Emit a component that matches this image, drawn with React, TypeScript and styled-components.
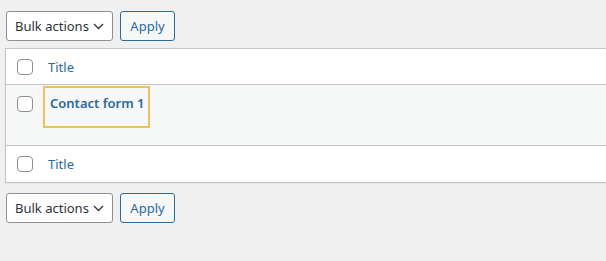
import React from "react";
import styled, { createGlobalStyle } from "styled-components";

const GlobalStyle = createGlobalStyle`
  body {
    margin: 0;
    background: #f0f0f1;
    font-family: "Noto Sans", "Open Sans", sans-serif;
    color: #2c3338;
    overflow: hidden;
  }
`;

const Page = styled.div`
  width: 680px;
  padding: 11px 0 0 5px;
`;

const TableNav = styled.div<{ $bottom?: boolean }>`
  display: flex;
  align-items: center;
  gap: 7px;
  height: 30px;
  margin-left: 1px;
  margin-top: ${(p) => (p.$bottom ? "10px" : "0")};
  margin-bottom: ${(p) => (p.$bottom ? "0" : "7px")};
`;

const Select = styled.div`
  box-sizing: border-box;
  display: flex;
  align-items: center;
  justify-content: space-between;
  width: 107px;
  height: 30px;
  padding: 0 8px 0 8px;
  background: #fff;
  border: 1px solid #8c8f94;
  border-radius: 3px;
  font-size: 13px;
  white-space: nowrap;
  color: #2c3338;
  svg {
    flex: none;
  }
`;

const Button = styled.div`
  box-sizing: border-box;
  display: flex;
  align-items: center;
  justify-content: center;
  width: 55px;
  height: 30px;
  background: #f6f7f7;
  border: 1px solid #2a6a9c;
  border-radius: 3px;
  color: #2a6a9c;
  font-size: 13px;
`;

const Table = styled.div`
  background: #fff;
  border: 1px solid #c3c4c7;
  box-shadow: 0 1px 1px rgba(0, 0, 0, 0.04);
`;

const Row = styled.div<{ $height: number; $striped?: boolean; $divider?: boolean; $top?: boolean }>`
  display: flex;
  align-items: ${(p) => (p.$top ? "flex-start" : "center")};
  height: ${(p) => p.$height}px;
  background: ${(p) => (p.$striped ? "#f6f7f7" : "#fff")};
  border-bottom: ${(p) => (p.$divider ? "1px solid #c3c4c7" : "none")};
`;

const CheckCell = styled.div<{ $top?: boolean }>`
  flex: none;
  width: 31px;
  padding-left: 11px;
  padding-top: ${(p) => (p.$top ? "11px" : "0")};
  display: flex;
`;

const Checkbox = styled.span`
  box-sizing: border-box;
  width: 16px;
  height: 16px;
  background: #fff;
  border: 1px solid #8c8f94;
  border-radius: 4px;
`;

const HeadLabel = styled.span`
  color: #2a6a9c;
  font-size: 13px;
`;

const TitleLink = styled.span`
  display: inline-block;
  margin: 1px 0 0 -5px;
  padding: 6px 4px 13px 5px;
  border: 2px solid #f0c05a;
  color: #2a6a9c;
  font-weight: 600;
  font-size: 13px;
  line-height: 19px;
`;

function Chevron() {
  return (
    <svg width="11" height="7" viewBox="0 0 11 7">
      <path d="M1 1l4.5 4.5L10 1" fill="none" stroke="#2c3338" strokeWidth="1.3" />
    </svg>
  );
}

function Nav({ bottom }: { bottom?: boolean }) {
  return (
    <TableNav $bottom={bottom}>
      <Select>
        <span>Bulk actions</span>
        <Chevron />
      </Select>
      <Button>Apply</Button>
    </TableNav>
  );
}

export default function App() {
  return (
    <>
      <GlobalStyle />
      <Page>
        <Nav />
        <Table>
          <Row $height={35} $divider>
            <CheckCell>
              <Checkbox />
            </CheckCell>
            <HeadLabel>Title</HeadLabel>
          </Row>
          <Row $height={60} $striped $divider $top>
            <CheckCell $top>
              <Checkbox />
            </CheckCell>
            <TitleLink>Contact form 1</TitleLink>
          </Row>
          <Row $height={36}>
            <CheckCell>
              <Checkbox />
            </CheckCell>
            <HeadLabel>Title</HeadLabel>
          </Row>
        </Table>
        <Nav bottom />
      </Page>
    </>
  );
}
